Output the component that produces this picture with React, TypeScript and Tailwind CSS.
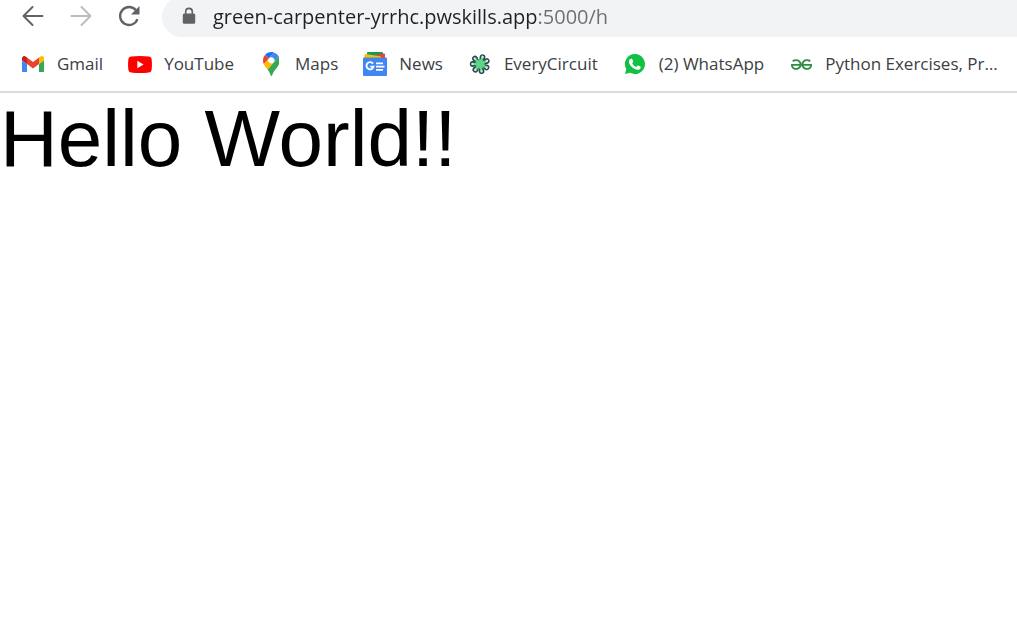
import { useState, type ReactNode } from "react";
import { SiGeeksforgeeks } from "react-icons/si";

function BackIcon() {
  return (
    <svg viewBox="0 0 24 24" className="size-6" fill="none" stroke="currentColor" strokeWidth="2" strokeLinecap="round" strokeLinejoin="round" aria-hidden="true">
      <path d="M21.500 12H2.500M11.500 3l-9 9L11.500 21" />
    </svg>
  );
}

function ForwardIcon() {
  return (
    <svg viewBox="0 0 24 24" className="size-6" fill="none" stroke="currentColor" strokeWidth="2" strokeLinecap="round" strokeLinejoin="round" aria-hidden="true">
      <path d="M2.500 12h19M12.500 3l9 9-9 9" />
    </svg>
  );
}

function ReloadIcon() {
  return (
    <svg viewBox="0 0 24 24" className="size-6" aria-hidden="true">
      <path d="M19 6.200A9 9 0 1 0 20.500 15.200" fill="none" stroke="currentColor" strokeWidth="2.300" />
      <path d="M22.500 2v8.500H14z" fill="currentColor" />
    </svg>
  );
}

function LockIcon() {
  return (
    <svg viewBox="0 0 18 18" className="size-[18px] shrink-0 text-[#5f6368]" aria-hidden="true">
      <path d="M5.700 8V4.700a3.300 3.300 0 0 1 6.600 0V8" fill="none" stroke="currentColor" strokeWidth="1.600" />
      <rect x="2.800" y="6.500" width="12.400" height="10.300" rx="1.500" fill="currentColor" />
    </svg>
  );
}

function GmailIcon() {
  return (
    <svg viewBox="52 42 88 66" className="w-[22px]" aria-hidden="true">
      <path fill="#4285f4" d="M58 108h14V74L52 59v43c0 3.320 2.690 6 6 6" />
      <path fill="#34a853" d="M120 108h14c3.320 0 6-2.690 6-6V59l-20 15" />
      <path fill="#fbbc04" d="M120 48v26l20-15v-8c0-7.420-8.470-11.650-14.400-7.200" />
      <path fill="#ea4335" d="M72 74V48l24 18 24-18v26L96 92" />
      <path fill="#c5221f" d="M52 51v8l20 15V48l-5.600-4.200c-5.940-4.450-14.400-.220-14.400 7.200" />
    </svg>
  );
}

function YouTubeIcon() {
  return (
    <svg viewBox="0 0 24 17" className="w-6" aria-hidden="true">
      <path fill="#f00" d="M3 .500Q12-.500 21 .500Q23.300.700 23.600 3Q24.300 8.500 23.600 14Q23.300 16.300 21 16.500Q12 17.500 3 16.500Q.700 16.300.400 14Q-.300 8.500.400 3Q.700.700 3 .500z" />
      <path fill="#fff" d="M9.300 4.800v7.400l6.300-3.700z" />
    </svg>
  );
}

function MapsIcon() {
  return (
    <svg viewBox="0 0 92.300 132.300" className="h-6" aria-hidden="true">
      <path fill="#1a73e8" d="M60.200 2.200C55.800.8 51 0 46.100 0 32 0 19.300 6.400 10.800 16.500l21.800 18.300L60.200 2.200z" />
      <path fill="#ea4335" d="M10.800 16.500C4.100 24.500 0 34.900 0 46.100c0 8.700 1.700 15.700 4.600 22l28-33.300-21.800-18.300z" />
      <path fill="#4285f4" d="M46.200 28.500c9.800 0 17.700 7.900 17.700 17.700 0 4.300-1.600 8.300-4.200 11.400 0 0 13.900-16.600 27.500-32.700-5.600-10.800-15.300-19-27-22.700L32.600 34.800c3.300-3.800 8.100-6.300 13.600-6.300" />
      <path fill="#fbbc04" d="M46.200 63.800c-9.800 0-17.700-7.900-17.700-17.700 0-4.300 1.500-8.300 4.100-11.300l-28 33.300c4.800 10.600 12.800 19.200 21 29.900l34.100-40.500c-3.300 3.900-8.100 6.300-13.500 6.300" />
      <path fill="#34a853" d="M59.100 109.200c15.400-24.100 33.300-35 33.300-63 0-7.700-1.900-14.900-5.200-21.300L25.600 98c2.600 3.400 5.300 7.300 7.900 11.300 9.400 14.500 6.800 23.100 12.800 23.100s3.400-8.700 12.800-23.200" />
    </svg>
  );
}

function NewsIcon() {
  return (
    <svg viewBox="0 0 24 24" className="size-6" aria-hidden="true">
      <path fill="#0c9d58" d="M4 1q0-1 1-1h14q1 0 1 1v8H4z" />
      <path fill="#ea4335" d="M12 3l9-1.500q1-.100 1 1V9H12z" />
      <path fill="#fbbc04" d="M1.500 3.200Q1.700 2 3 2.100L18 4.500v5H1z" />
      <path fill="#4285f4" d="M0 6.500Q0 5.500 1 5.500h22q1 0 1 1V23q0 1-1 1H1q-1 0-1-1z" />
      <path fill="none" stroke="#fff" strokeWidth="1.900" d="M10 11.600A3.600 3.600 0 1 0 10.600 14.600H7.300" />
      <path stroke="#fff" strokeWidth="1.700" d="M13 11.300h7M13 14.600h8.500M13 17.900h7" />
    </svg>
  );
}

const spokes = [20, 66, 118, 168, 219, 270, 317];

function EveryCircuitIcon() {
  return (
    <svg viewBox="-12 -12 24 24" className="size-6" aria-hidden="true">
      {spokes.map((angle) => (
        <g key={angle} transform={`rotate(${angle})`}>
          <path d="M0 0V-7" stroke="#2b4552" strokeWidth="4.400" />
          <circle cy="-7.300" r="2.900" fill="#2b4552" />
        </g>
      ))}
      <circle r="4.800" fill="#4cc67a" />
      {spokes.map((angle) => (
        <g key={angle} transform={`rotate(${angle})`}>
          <path d="M0 0V-7" stroke="#5fd685" strokeWidth="2.200" />
          <circle cy="-7.500" r="1.300" fill="#c9f2d5" />
        </g>
      ))}
    </svg>
  );
}

function WhatsAppIcon() {
  return (
    <svg viewBox="0 0 24 24" className="size-6" aria-hidden="true">
      <path fill="#0fc243" d="M12 2a10 10 0 1 1-4.800 18.800L2 22l1.300-5A10 10 0 0 1 12 2z" />
      <path fill="#fff" d="M8.300 6.700c.5 0 .8 0 1 .5l.9 2.100c.1.400 0 .7-.200 1l-.8 1c.9 1.700 2.200 2.900 4 3.700l1.100-1.300c.3-.3.600-.4.900-.2l2.100 1c.4.200.5.400.4.900-.2 1.500-1.500 2.300-2.900 2.300-2.300-.1-4.400-1.300-6.200-3-1.600-1.600-2.700-3.500-2.700-5.200 0-1.500.8-2.800 2.400-2.800z" />
    </svg>
  );
}

type Bookmark = { label: string; href: string; icon: ReactNode };

const bookmarks: Bookmark[] = [
  { label: "Gmail", href: "#gmail", icon: <GmailIcon /> },
  { label: "YouTube", href: "#youtube", icon: <YouTubeIcon /> },
  { label: "Maps", href: "#maps", icon: <MapsIcon /> },
  { label: "News", href: "#news", icon: <NewsIcon /> },
  { label: "EveryCircuit", href: "#everycircuit", icon: <EveryCircuitIcon /> },
  { label: "(2) WhatsApp", href: "#whatsapp", icon: <WhatsAppIcon /> },
  {
    label: "Python Exercises, Pr…",
    href: "#python",
    icon: <SiGeeksforgeeks className="size-[21px] text-[#2f8d46]" aria-hidden="true" />,
  },
];

export default function App() {
  const [address, setAddress] = useState("green-carpenter-yrrhc.pwskills.app:5000/h");

  return (
    <div className="min-h-screen bg-white font-['Open_Sans',sans-serif]">
      <header className="border-b-2 border-[#dadbdc]">
        <div className="flex h-[37px] items-end overflow-hidden pl-[21px]">
          <nav aria-label="History" className="mr-[21px] flex h-10 shrink-0 items-center gap-6 pb-0.5 text-[#5f6368]">
            <button type="button" aria-label="Back"><BackIcon /></button>
            <button type="button" aria-label="Forward" disabled className="text-[#babcbe]"><ForwardIcon /></button>
            <button type="button" aria-label="Reload"><ReloadIcon /></button>
          </nav>
          <div className="flex h-10 min-w-0 flex-1 items-center gap-[15px] rounded-l-full bg-[#f1f3f4] pb-0.5 pl-[18px]">
            <LockIcon />
            <input
              type="text"
              aria-label="Address"
              spellCheck={false}
              value={address}
              onChange={(event) => setAddress(event.target.value)}
              className="h-8 min-w-0 flex-1 bg-[linear-gradient(to_right,#202124_324px,#6b6f73_324px)] bg-clip-text text-xl text-[#202124] outline-none [-webkit-text-fill-color:transparent]"
            />
          </div>
        </div>
        <nav aria-label="Bookmarks" className="flex h-[54px] items-center gap-[25px] overflow-hidden pl-[21px]">
          {bookmarks.map((bookmark) => (
            <a key={bookmark.label} href={bookmark.href} className="flex shrink-0 items-center gap-3 text-[17px] leading-6 text-[#3c4043]">
              <span className="flex size-6 items-center justify-center">{bookmark.icon}</span>
              <span>{bookmark.label}</span>
            </a>
          ))}
        </nav>
      </header>
      <main>
        <p className="font-['Liberation_Sans',Arial,sans-serif] text-[80px] leading-[92px] text-black">Hello World!!</p>
      </main>
    </div>
  );
}
